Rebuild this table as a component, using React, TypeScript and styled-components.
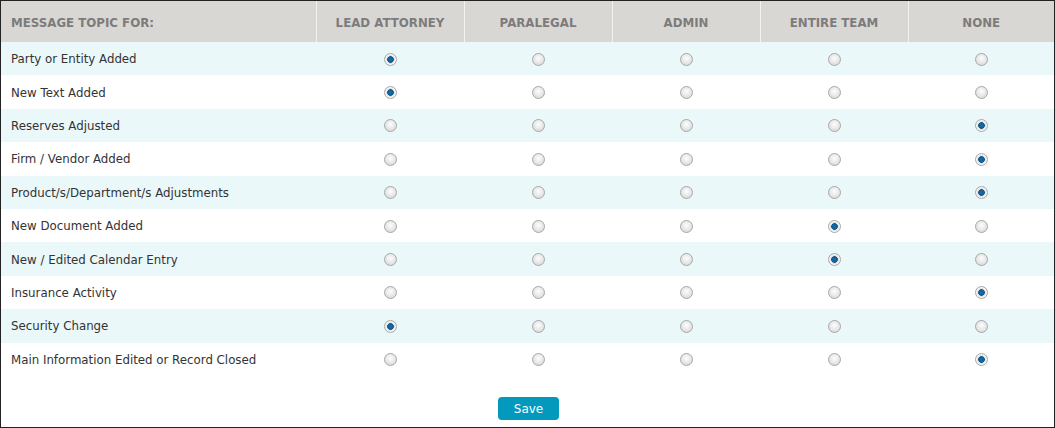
import React, { useState } from "react";
import styled, { createGlobalStyle } from "styled-components";

const Global = createGlobalStyle`
  html, body { margin: 0; padding: 0; background: #fff; }
  body { font-family: Tahoma, "DejaVu Sans", "Noto Sans", sans-serif; }
`;

const Frame = styled.div`
  box-sizing: border-box;
  width: 1055px;
  height: 428px;
  border: 1px solid #222;
  display: flex;
  flex-direction: column;
  background: #fff;
`;

const Table = styled.table`
  width: 100%;
  border-collapse: collapse;
  table-layout: fixed;
`;

const HeadCell = styled.th<{ $first?: boolean }>`
  height: 41px;
  padding: 2px 0 0 ${(p) => (p.$first ? "10px" : "0")};
  background: #d9d7d4;
  color: #7c7c7c;
  font-family: "DejaVu Sans", sans-serif;
  font-size: 11.8px;
  font-weight: bold;
  text-align: ${(p) => (p.$first ? "left" : "center")};
  border-left: ${(p) => (p.$first ? "none" : "1px solid #f4f3f1")};
  box-sizing: border-box;
`;

const Row = styled.tr<{ $alt: boolean }>`
  background: ${(p) => (p.$alt ? "#eaf8fa" : "#fff")};
`;

const LabelCell = styled.td`
  height: 33.4px;
  padding: 1px 0 0 10px;
  font-family: "DejaVu Sans", sans-serif;
  font-size: 11.8px;
  color: #333;
  box-sizing: border-box;
`;

const RadioCell = styled.td`
  text-align: center;
  padding: 1px 0 0 0;
  line-height: 0;
`;

const Radio = styled.input.attrs({ type: "radio" })`
  appearance: none;
  -webkit-appearance: none;
  margin: 0;
  width: 13px;
  height: 13px;
  border-radius: 50%;
  border: 1px solid #a9a9a9;
  box-sizing: border-box;
  background: radial-gradient(circle at 50% 40%, #fdfdfd 0%, #e6e6e6 55%, #cfcfcf 100%);
  vertical-align: middle;
  cursor: pointer;
  &:checked {
    background: radial-gradient(circle at 50% 50%, #1d6fa8 0px, #0d5a90 3px, #d8d8d8 3.6px, #fafafa 5px, #c8c8c8 6.5px);
  }
`;

const Footer = styled.div`
  flex: 1;
  display: flex;
  align-items: flex-end;
  justify-content: center;
  padding-bottom: 7px;
`;

const SaveButton = styled.button`
  width: 61px;
  height: 23px;
  margin-left: 2px;
  border: none;
  border-radius: 4px;
  background: #0399bd;
  color: #fff;
  font-family: "DejaVu Sans", sans-serif;
  font-size: 12px;
  padding: 0;
  cursor: pointer;
`;

const columns = ["LEAD ATTORNEY", "PARALEGAL", "ADMIN", "ENTIRE TEAM", "NONE"];

const topics: [string, number][] = [
  ["Party or Entity Added", 0],
  ["New Text Added", 0],
  ["Reserves Adjusted", 4],
  ["Firm / Vendor Added", 4],
  ["Product/s/Department/s Adjustments", 4],
  ["New Document Added", 3],
  ["New / Edited Calendar Entry", 3],
  ["Insurance Activity", 4],
  ["Security Change", 0],
  ["Main Information Edited or Record Closed", 4],
];

export default function App() {
  const [sel, setSel] = useState<number[]>(topics.map((t) => t[1]));
  return (
    <>
      <Global />
      <Frame>
        <Table>
          <colgroup>
            <col style={{ width: 315 }} />
            <col style={{ width: 148 }} />
            <col style={{ width: 148 }} />
            <col style={{ width: 148 }} />
            <col style={{ width: 148 }} />
            <col />
          </colgroup>
          <thead>
            <tr>
              <HeadCell $first>MESSAGE TOPIC FOR:</HeadCell>
              {columns.map((c) => (
                <HeadCell key={c}>{c}</HeadCell>
              ))}
            </tr>
          </thead>
          <tbody>
            {topics.map(([label], i) => (
              <Row key={label} $alt={i % 2 === 0}>
                <LabelCell>{label}</LabelCell>
                {columns.map((c, j) => (
                  <RadioCell key={c}>
                    <Radio
                      name={`topic-${i}`}
                      checked={sel[i] === j}
                      onChange={() =>
                        setSel((s) => s.map((v, k) => (k === i ? j : v)))
                      }
                    />
                  </RadioCell>
                ))}
              </Row>
            ))}
          </tbody>
        </Table>
        <Footer>
          <SaveButton>Save</SaveButton>
        </Footer>
      </Frame>
    </>
  );
}
